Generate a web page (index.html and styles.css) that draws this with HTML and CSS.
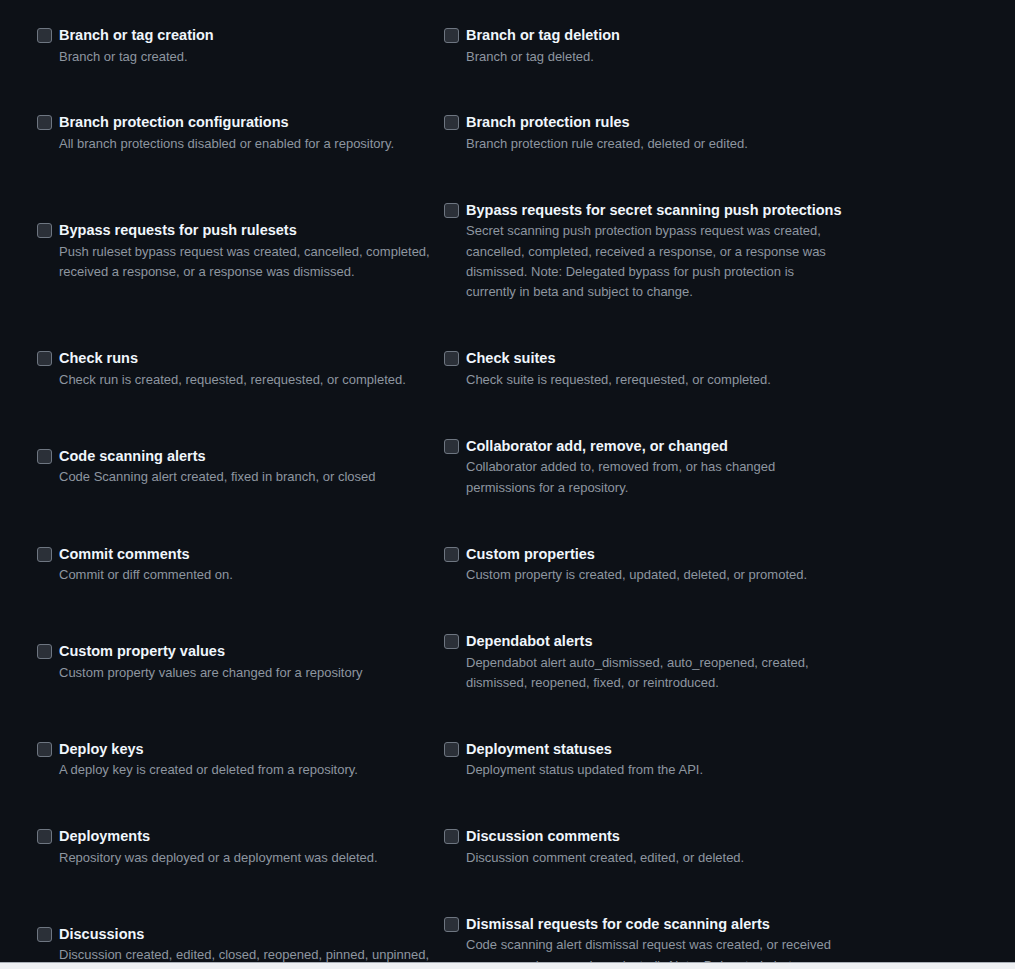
FILE: index.html
```html
<!DOCTYPE html>
<html lang="en">
<head>
  <meta charset="UTF-8" />
  <title>Webhook events</title>
  <link rel="stylesheet" href="styles.css">
</head>
<body>
  <div class="viewport">
    <ul class="events">
      <li class="event">
        <input type="checkbox" class="check">
        <div class="event-text">
          <div class="event-name">Branch or tag creation</div>
          <div class="event-note">Branch or tag created.</div>
        </div>
      </li>
      <li class="event">
        <input type="checkbox" class="check">
        <div class="event-text">
          <div class="event-name">Branch or tag deletion</div>
          <div class="event-note">Branch or tag deleted.</div>
        </div>
      </li>

      <li class="event">
        <input type="checkbox" class="check">
        <div class="event-text">
          <div class="event-name">Branch protection configurations</div>
          <div class="event-note">All branch protections disabled or enabled for a repository.</div>
        </div>
      </li>
      <li class="event">
        <input type="checkbox" class="check">
        <div class="event-text">
          <div class="event-name">Branch protection rules</div>
          <div class="event-note">Branch protection rule created, deleted or edited.</div>
        </div>
      </li>

      <li class="event">
        <input type="checkbox" class="check">
        <div class="event-text">
          <div class="event-name">Bypass requests for push rulesets</div>
          <div class="event-note">Push ruleset bypass request was created, cancelled, completed, received a response, or a response was dismissed.</div>
        </div>
      </li>
      <li class="event">
        <input type="checkbox" class="check">
        <div class="event-text">
          <div class="event-name">Bypass requests for secret scanning push protections</div>
          <div class="event-note">Secret scanning push protection bypass request was created, cancelled, completed, received a response, or a response was dismissed. Note: Delegated bypass for push protection is currently in beta and subject to change.</div>
        </div>
      </li>

      <li class="event">
        <input type="checkbox" class="check">
        <div class="event-text">
          <div class="event-name">Check runs</div>
          <div class="event-note">Check run is created, requested, rerequested, or completed.</div>
        </div>
      </li>
      <li class="event">
        <input type="checkbox" class="check">
        <div class="event-text">
          <div class="event-name">Check suites</div>
          <div class="event-note">Check suite is requested, rerequested, or completed.</div>
        </div>
      </li>

      <li class="event">
        <input type="checkbox" class="check">
        <div class="event-text">
          <div class="event-name">Code scanning alerts</div>
          <div class="event-note">Code Scanning alert created, fixed in branch, or closed</div>
        </div>
      </li>
      <li class="event">
        <input type="checkbox" class="check">
        <div class="event-text">
          <div class="event-name">Collaborator add, remove, or changed</div>
          <div class="event-note">Collaborator added to, removed from, or has changed permissions for a repository.</div>
        </div>
      </li>

      <li class="event">
        <input type="checkbox" class="check">
        <div class="event-text">
          <div class="event-name">Commit comments</div>
          <div class="event-note">Commit or diff commented on.</div>
        </div>
      </li>
      <li class="event">
        <input type="checkbox" class="check">
        <div class="event-text">
          <div class="event-name">Custom properties</div>
          <div class="event-note">Custom property is created, updated, deleted, or promoted.</div>
        </div>
      </li>

      <li class="event">
        <input type="checkbox" class="check">
        <div class="event-text">
          <div class="event-name">Custom property values</div>
          <div class="event-note">Custom property values are changed for a repository</div>
        </div>
      </li>
      <li class="event">
        <input type="checkbox" class="check">
        <div class="event-text">
          <div class="event-name">Dependabot alerts</div>
          <div class="event-note">Dependabot alert auto_dismissed, auto_reopened, created, dismissed, reopened, fixed, or reintroduced.</div>
        </div>
      </li>

      <li class="event">
        <input type="checkbox" class="check">
        <div class="event-text">
          <div class="event-name">Deploy keys</div>
          <div class="event-note">A deploy key is created or deleted from a repository.</div>
        </div>
      </li>
      <li class="event">
        <input type="checkbox" class="check">
        <div class="event-text">
          <div class="event-name">Deployment statuses</div>
          <div class="event-note">Deployment status updated from the API.</div>
        </div>
      </li>

      <li class="event">
        <input type="checkbox" class="check">
        <div class="event-text">
          <div class="event-name">Deployments</div>
          <div class="event-note">Repository was deployed or a deployment was deleted.</div>
        </div>
      </li>
      <li class="event">
        <input type="checkbox" class="check">
        <div class="event-text">
          <div class="event-name">Discussion comments</div>
          <div class="event-note">Discussion comment created, edited, or deleted.</div>
        </div>
      </li>

      <li class="event">
        <input type="checkbox" class="check">
        <div class="event-text">
          <div class="event-name">Discussions</div>
          <div class="event-note">Discussion created, edited, closed, reopened, pinned, unpinned, locked, unlocked, transferred, answered, unanswered, labeled, or deleted.</div>
        </div>
      </li>
      <li class="event">
        <input type="checkbox" class="check">
        <div class="event-text">
          <div class="event-name">Dismissal requests for code scanning alerts</div>
          <div class="event-note">Code scanning alert dismissal request was created, or received a response (approved or rejected). Note: Delegated alert dismissal for code scanning alerts is currently in beta and subject to change.</div>
        </div>
      </li>
    </ul>
  </div>
  <div class="scrollbar"></div>
</body>
</html>
```

FILE: styles.css
```css
:root {
  --bg: #0d1117;
  --text: #f0f6fc;
  --muted: #8d96a0;
  --box: #2b3038;
  --box-border: #6e7681;
}
* { box-sizing: border-box; margin: 0; padding: 0; }
body {
  font-family: 'Liberation Sans', Arial, sans-serif;
  background: var(--bg);
  color: var(--text);
}
.viewport {
  height: 962px;
  overflow: hidden;
}
.events {
  list-style: none;
  display: grid;
  grid-template-columns: 407px 407px;
  row-gap: 45.7px;
  align-items: center;
  padding: 25px 0 0 37px;
}
.event {
  display: flex;
  align-items: flex-start;
  gap: 7px;
}
.check {
  appearance: none;
  -webkit-appearance: none;
  flex: none;
  width: 15px;
  height: 15px;
  margin-top: 3px;
  background: var(--box);
  border: 1px solid var(--box-border);
  border-radius: 3px;
}
.event-text { width: 372px; }
.event-name {
  font-size: 14.5px;
  font-weight: 700;
  line-height: 21.5px;
  white-space: nowrap;
  color: var(--text);
}
.event-note {
  font-size: 13px;
  line-height: 20.3px;
  color: var(--muted);
}
.scrollbar {
  height: 7px;
  background: #eef0f3;
  border-top: 1px solid #a9afb7;
}
```
